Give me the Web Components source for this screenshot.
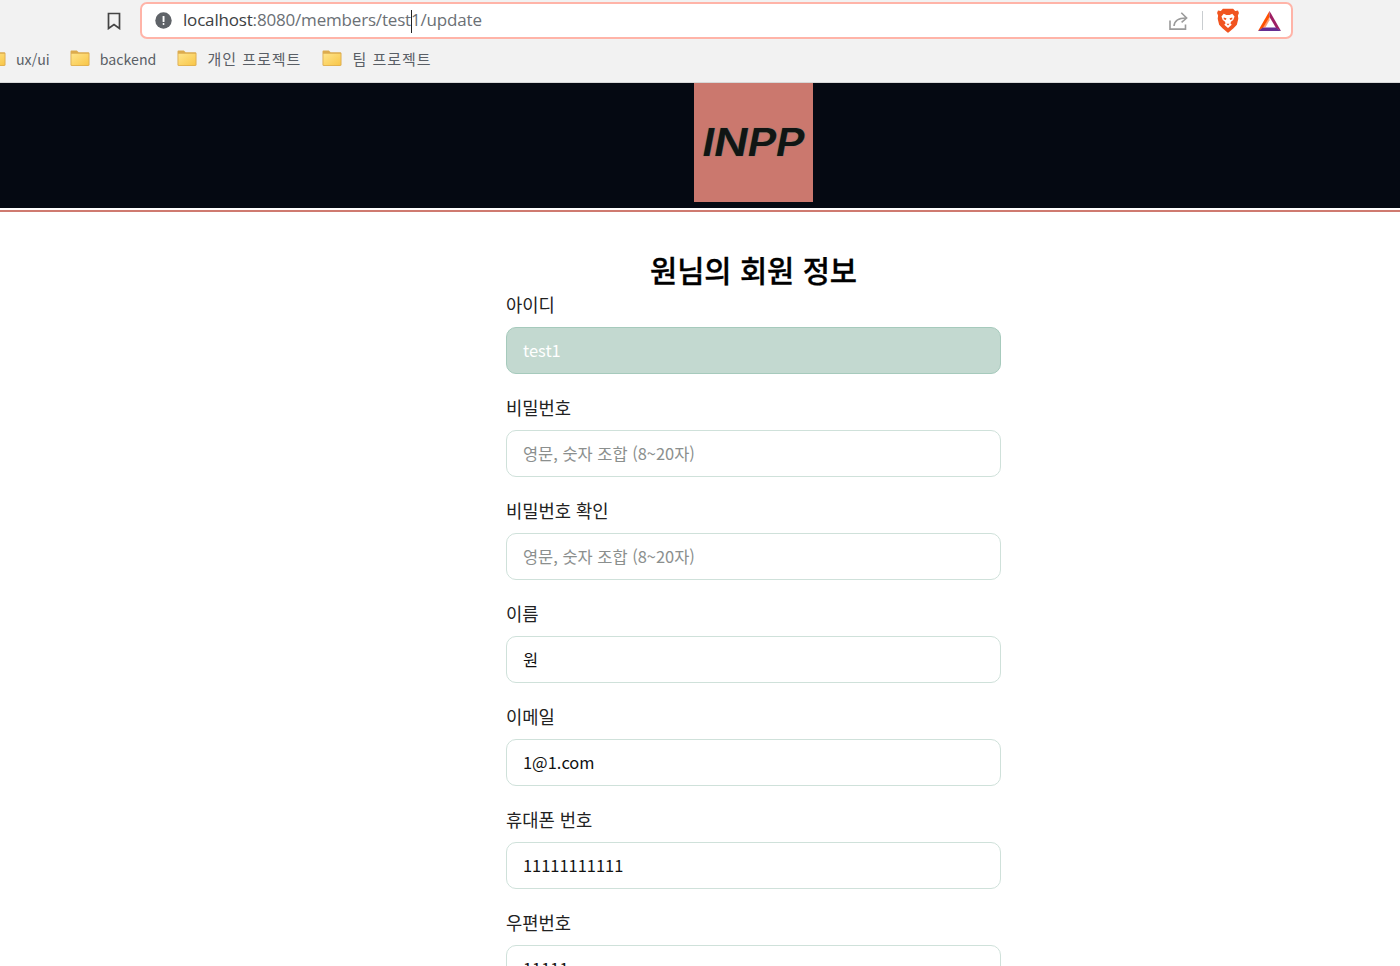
<!doctype html>
<html lang="ko">
<head>
<meta charset="utf-8">
<title>INPP</title>
<style>
  html, body { margin: 0; height: 966px; overflow: hidden; background: #fff; }
</style>
</head>
<body>
<browser-toolbar url-host="localhost" url-path=":8080/members/test" url-rest="1/update"></browser-toolbar>
<bookmark-bar>
  <bookmark-item>ux/ui</bookmark-item>
  <bookmark-item>backend</bookmark-item>
  <bookmark-item wide>개인 프로젝트</bookmark-item>
  <bookmark-item wide>팀 프로젝트</bookmark-item>
</bookmark-bar>
<site-header></site-header>
<member-form heading="원님의 회원 정보">
  <form-field label="아이디" value="test1" readonly></form-field>
  <form-field label="비밀번호" placeholder="영문, 숫자 조합 (8~20자)"></form-field>
  <form-field label="비밀번호 확인" placeholder="영문, 숫자 조합 (8~20자)"></form-field>
  <form-field label="이름" value="원"></form-field>
  <form-field label="이메일" value="1@1.com"></form-field>
  <form-field label="휴대폰 번호" value="11111111111"></form-field>
  <form-field label="우편번호" value="11111"></form-field>
</member-form>

<script>
const KR = `"Noto Sans CJK KR", "Noto Sans", sans-serif`;

class BrowserToolbar extends HTMLElement {
  constructor() {
    super();
    this.attachShadow({ mode: "open" });
  }

  connectedCallback() {
    const host = this.getAttribute("url-host");
    const path = this.getAttribute("url-path");
    const rest = this.getAttribute("url-rest");
    this.shadowRoot.innerHTML = `
      <style>
        :host {
          display: flex;
          align-items: center;
          height: 41px;
          box-sizing: border-box;
          padding: 2px 107px 2px 106px;
          background: #f2f2f2;
          font-family: "Open Sans", "Noto Sans", sans-serif;
        }
        .bookmark { width: 16px; height: 18px; margin-right: 18px; flex: none; }
        .omnibox {
          flex: 1;
          height: 37px;
          box-sizing: border-box;
          display: flex;
          align-items: center;
          padding: 0 10px 0 13px;
          background: #fff;
          border: 2.5px solid #ffb4a8;
          border-radius: 7px;
        }
        .info { width: 17px; height: 17px; margin-right: 11px; flex: none; }
        .url {
          flex: 1;
          font-size: 17px;
          letter-spacing: -0.18px;
          color: #6b7075;
          white-space: nowrap;
        }
        .url b { font-weight: 400; color: #3c4043; }
        .caret {
          display: inline-block;
          width: 1px;
          height: 23px;
          margin-right: -1px;
          vertical-align: middle;
          background: #222;
        }
        .share { width: 20px; height: 20px; margin-right: 14px; }
        .sep { width: 1px; height: 19px; background: #c9cdd0; margin-right: 14px; }
        .brave { width: 22px; height: 25px; margin-right: 19px; }
        .bat { width: 23px; height: 20px; }
      </style>
      <svg class="bookmark" viewBox="0 0 16 18" fill="none" stroke="#444" stroke-width="1.7">
        <path d="M2.5 1.5h11v15L8 12.6 2.5 16.5z"/>
      </svg>
      <div class="omnibox">
        <svg class="info" viewBox="0 0 17 17">
          <circle cx="8.5" cy="8.5" r="8.2" fill="#5f6368"/>
          <rect x="7.6" y="4" width="1.9" height="6" rx=".6" fill="#fff"/>
          <rect x="7.6" y="11" width="1.9" height="1.9" rx=".9" fill="#fff"/>
        </svg>
        <div class="url"><b>${host}</b>${path}<span class="caret"></span>${rest}</div>
        <svg class="share" viewBox="0 0 20 20" fill="none" stroke="#9a9a9a" stroke-width="1.6">
          <path d="M2 9.5v8.6h15.5v-4.6"/>
          <path d="M6 15c.4-5 4-8 12-8"/>
          <path d="M13.3 1.8 18.6 7l-5 4.4"/>
        </svg>
        <div class="sep"></div>
        <svg class="brave" viewBox="0 0 21 24">
          <path fill="#f1541f" d="M5.6 0.6h9.8l2 2.2 2.7-.3.9 2.2-1 2.4.4 3.3-1.4 5.6-3.2 3.4L11 23.6a1 1 0 0 1-1 0l-4.8-4.2-3.2-3.4L.6 10.4 1 7.1 0 4.7l.9-2.2 2.7.3z"/>
          <path fill="#fff" d="M4.2 8.2 6.4 5.6l2.6 1h3l2.6-1 2.2 2.6-1.3 3.4-2.2 1.6-.4 1.6 1.2 1.3-3.6 3-3.6-3 1.2-1.3-.4-1.6-2.2-1.6z"/>
          <path fill="#f1541f" d="M6.4 9.2l2.6.7-.5 1.6-2.1-.7zM14.6 9.2l-2.6.7.5 1.6 2.1-.7zM9 15.2h3l-1.5 1.5z"/>
        </svg>
        <svg class="bat" viewBox="0 0 23 20">
          <path fill="#ff5000" d="M11.5 0 0 20l5-3.1L11.5 6z"/>
          <path fill="#9e1f63" d="M11.5 0 23 20l-5-3.1L11.5 6z"/>
          <path fill="#662d91" d="M0 20h23l-5-3.6H5z"/>
          <path fill="#ff5000" d="M11.5 9.2 7.4 16.4H5l6.5-11z" opacity=".55"/>
        </svg>
      </div>
    `;
  }
}
customElements.define("browser-toolbar", BrowserToolbar);

class BookmarkBar extends HTMLElement {
  constructor() {
    super();
    this.attachShadow({ mode: "open" });
    this.shadowRoot.innerHTML = `
      <style>
        :host {
          display: flex;
          align-items: center;
          gap: 21px;
          height: 41px;
          padding: 0 0 6px 0;
          margin-bottom: 1px;
          box-sizing: border-box;
          overflow: hidden;
          background: #f2f2f2;
          box-shadow: 0 1px 0 #d8d8d8;
        }
        ::slotted(:first-child) { margin: 0 -1px 0 -14px; }
      </style>
      <slot></slot>
    `;
  }
}
customElements.define("bookmark-bar", BookmarkBar);

class BookmarkItem extends HTMLElement {
  constructor() {
    super();
    this.attachShadow({ mode: "open" });
    this.shadowRoot.innerHTML = `
      <style>
        :host {
          display: flex;
          align-items: center;
          gap: 10px;
          flex: none;
          font-family: ${KR};
          font-size: 14.2px;
          color: #5a5f66;
          white-space: nowrap;
        }
        :host([wide]) { font-size: 15px; letter-spacing: 1px; }
        svg { width: 20px; height: 17px; flex: none; }
      </style>
      <svg viewBox="0 0 20 17">
        <defs>
          <linearGradient id="fold" x1="0" y1="0" x2="1" y2="1">
            <stop offset="0" stop-color="#ffe48a"/>
            <stop offset="1" stop-color="#f8c648"/>
          </linearGradient>
        </defs>
        <path fill="#dcab4e" d="M.5 1.8C.5 1 1 .5 1.8.5h5l1.8 1.8h9.6c.7 0 1.3.6 1.3 1.3v11.2c0 .7-.6 1.2-1.3 1.2H1.8c-.7 0-1.3-.5-1.3-1.2z"/>
        <path fill="url(#fold)" d="M1.4 3.8h17.2v10.4c0 .6-.4 1-1 1H2.4c-.6 0-1-.4-1-1z"/>
      </svg>
      <slot></slot>
    `;
  }
}
customElements.define("bookmark-item", BookmarkItem);

class SiteHeader extends HTMLElement {
  constructor() {
    super();
    this.attachShadow({ mode: "open" });
    this.shadowRoot.innerHTML = `
      <style>
        :host {
          display: flex;
          justify-content: center;
          height: 125px;
          padding-left: 107px;
          background: #050912;
          box-shadow: 0 2px 0 #fff, 0 4px 0 #cf7a70;
        }
        .logo {
          width: 119px;
          height: 119px;
          display: flex;
          align-items: center;
          justify-content: center;
          background: #cb786e;
        }
        .logo span {
          display: inline-block;
          margin-bottom: 2px;
          transform: scaleX(1.18);
          color: #111513;
          font: italic 600 38px Inter, "Liberation Sans", sans-serif;
          letter-spacing: -0.5px;
          text-shadow: 0 0 1px #3f7f76;
        }
      </style>
      <div class="logo"><span>INPP</span></div>
    `;
  }
}
customElements.define("site-header", SiteHeader);

class MemberForm extends HTMLElement {
  constructor() {
    super();
    this.attachShadow({ mode: "open" });
  }

  connectedCallback() {
    this.shadowRoot.innerHTML = `
      <style>
        :host {
          display: flex;
          justify-content: center;
          padding: 41px 0 0 107px;
          font-family: ${KR};
        }
        .column { width: 495px; }
        h1 {
          margin: 0;
          text-align: center;
          font-size: 29.6px;
          font-weight: 500;
          -webkit-text-stroke: 0.35px #000;
          line-height: 42px;
          color: #000;
        }
        .fields { display: flex; flex-direction: column; gap: 20px; }
      </style>
      <div class="column">
        <h1>${this.getAttribute("heading")}</h1>
        <div class="fields"><slot></slot></div>
      </div>
    `;
  }
}
customElements.define("member-form", MemberForm);

class FormField extends HTMLElement {
  constructor() {
    super();
    this.attachShadow({ mode: "open" });
  }

  connectedCallback() {
    const placeholder = this.getAttribute("placeholder");
    const text = this.getAttribute("value") || placeholder;
    this.shadowRoot.innerHTML = `
      <style>
        :host { display: block; }
        .label {
          height: 26px;
          margin-bottom: 10px;
          font-size: 17.7px;
          line-height: 26px;
          color: #222;
        }
        .box {
          height: 47px;
          box-sizing: border-box;
          display: flex;
          align-items: center;
          padding: 0 16px 2px;
          background: #fff;
          border: 1.5px solid #cfe1da;
          border-radius: 10px;
          font-size: 16.45px;
          color: #111;
        }
        .box.placeholder { color: #8b8f8e; }
        :host([readonly]) .box {
          background: #c3d9d0;
          border-color: #a6cabc;
          color: #fff;
        }
      </style>
      <div class="label">${this.getAttribute("label")}</div>
      <div class="box ${placeholder ? "placeholder" : ""}">${text}</div>
    `;
  }
}
customElements.define("form-field", FormField);
</script>
</body>
</html>
